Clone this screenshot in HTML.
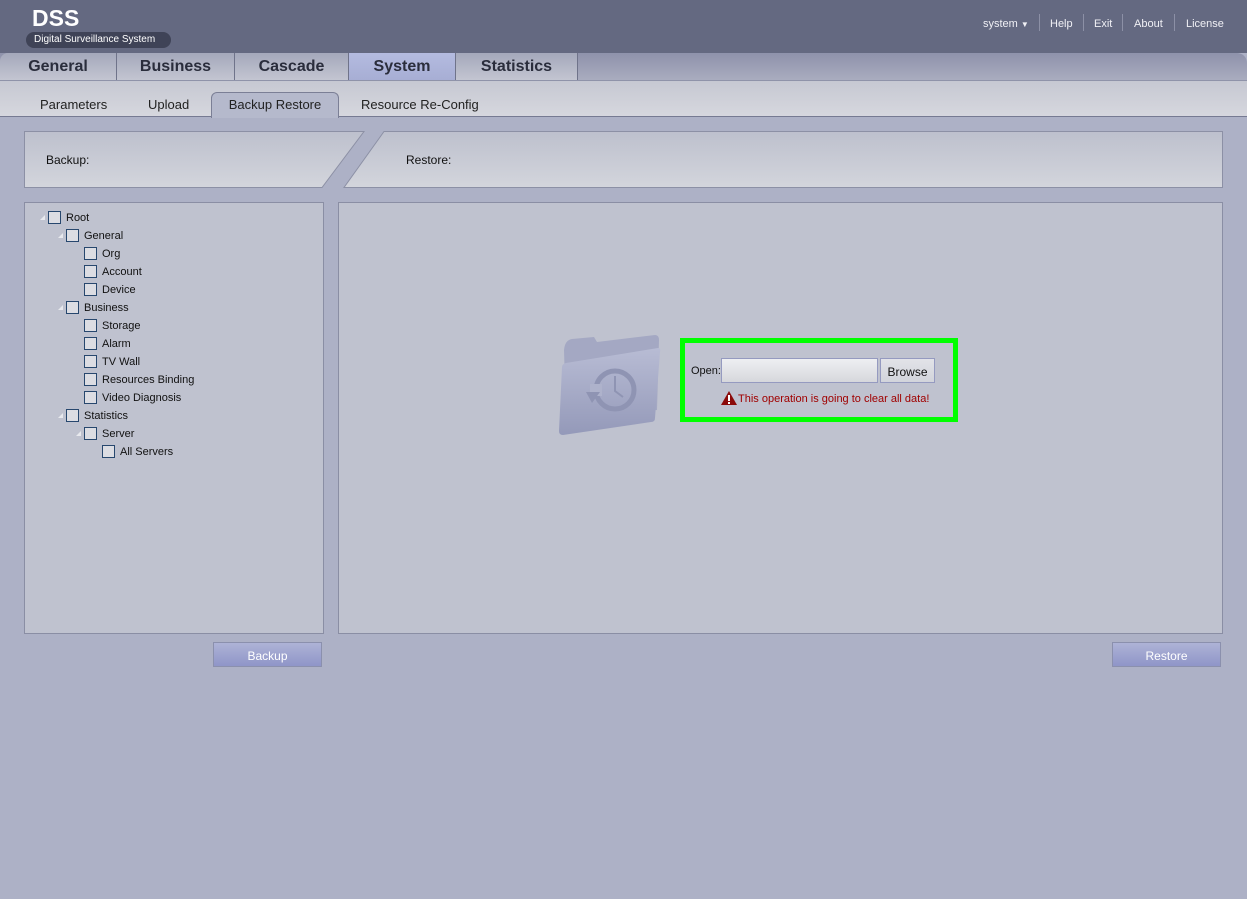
<!DOCTYPE html>
<html><head><meta charset="utf-8"><style>
*{margin:0;padding:0;box-sizing:border-box}
body{width:1247px;height:899px;background:#adb1c6;font-family:"Liberation Sans","DejaVu Sans",sans-serif;position:relative;overflow:hidden;font-size:11px;color:#111}
.abs{position:absolute}
#hdr{left:0;top:0;width:1247px;height:53px;background:#646981}
.logo{left:32px;top:5px;color:#fff;font-weight:bold;font-size:23px}
.pill{left:26px;top:32px;width:145px;height:16px;border-radius:8px;background:#3f4357;color:#fff;font-size:10px;line-height:16px;padding-left:8px}
.top{top:18px;color:#f0f0f5;font-size:11px}
.sep{top:14px;width:1px;height:17px;background:#8c90a6}
#tabs{left:0;top:53px;width:1247px;height:27px;background:linear-gradient(#8e92ab,#a9acbf);border-top-right-radius:10px}
.tab{top:53px;height:27px;background:linear-gradient(#a4a8bb,#c3c5d1);border-right:1px solid #6f738a;font-weight:bold;font-size:16px;color:#2a2d3c;text-align:center;line-height:27px}
#sub{left:0;top:80px;width:1247px;height:37px;background:linear-gradient(#c6c8d2,#d6d7de);border-top:1px solid #8f93a9;border-bottom:1px solid #767a92}
.st{top:97px;font-size:13px;color:#222}
.act{left:211px;top:92px;width:128px;height:26px;background:#b5b9cc;border:1px solid #7b7f96;border-bottom:none;border-radius:6px 6px 0 0;text-align:center;line-height:24px;font-size:13px;color:#222}
.panel{background:#bfc2cf;border:1px solid #8a8ea4}
.row{position:absolute;height:14px;font-size:11px;line-height:13px;color:#111}
.cb{display:inline-block;width:13px;height:13px;border:1px solid #27476e;background:#dcdde3;vertical-align:top;margin-right:5px;margin-top:-1px}
.tri{position:absolute;width:0;height:0;border-left:5px solid transparent;border-bottom:5px solid #e8e9ee}
.btn{height:25px;background:linear-gradient(#aeb3d6,#8f95c8);border:1px solid #8b90ad;color:#fff;font-size:12px;text-align:center;line-height:27px}
</style></head><body>
<div id="hdr" class="abs"></div>
<div class="abs logo">DSS</div>
<div class="abs pill">Digital Surveillance System</div>
<div class="abs top" style="left:983px">system <span style="font-size:8px">&#9660;</span></div>
<div class="abs sep" style="left:1039px"></div>
<div class="abs top" style="left:1050px">Help</div>
<div class="abs sep" style="left:1083px"></div>
<div class="abs top" style="left:1094px">Exit</div>
<div class="abs sep" style="left:1122px"></div>
<div class="abs top" style="left:1134px">About</div>
<div class="abs sep" style="left:1174px"></div>
<div class="abs top" style="left:1186px">License</div>

<div id="tabs" class="abs"></div>
<div class="abs tab" style="left:0;width:117px;border-top-left-radius:8px">General</div>
<div class="abs tab" style="left:117px;width:118px">Business</div>
<div class="abs tab" style="left:235px;width:114px">Cascade</div>
<div class="abs tab" style="left:349px;width:107px;background:linear-gradient(#b4bbe0,#a7aed4)">System</div>
<div class="abs tab" style="left:456px;width:122px">Statistics</div>

<div id="sub" class="abs"></div>
<div class="abs st" style="left:40px">Parameters</div>
<div class="abs st" style="left:148px">Upload</div>
<div class="abs act">Backup Restore</div>
<div class="abs st" style="left:361px">Resource Re-Config</div>

<svg class="abs" style="left:0;top:125px" width="1247" height="70">
<defs><linearGradient id="g" x1="0" y1="0" x2="0" y2="1"><stop offset="0" stop-color="#bdc0cd"/><stop offset="1" stop-color="#d3d5dc"/></linearGradient></defs>
<polygon points="24.5,6.5 364,6.5 322,62.5 24.5,62.5" fill="url(#g)" stroke="#8c90a5"/>
<polygon points="384,6.5 1222.5,6.5 1222.5,62.5 344,62.5" fill="url(#g)" stroke="#8c90a5"/>
<text x="46" y="39" font-size="12" font-family="Liberation Sans,sans-serif" fill="#111">Backup:</text>
<text x="406" y="39" font-size="12" font-family="Liberation Sans,sans-serif" fill="#111">Restore:</text>
</svg>

<div class="abs panel" style="left:24px;top:202px;width:300px;height:432px"></div>
<div class="abs panel" style="left:338px;top:202px;width:885px;height:432px"></div>

<div class="tri" style="left:40px;top:215px"></div><div class="row" style="left:48px;top:212px"><span class="cb"></span>Root</div>
<div class="tri" style="left:58px;top:233px"></div><div class="row" style="left:66px;top:230px"><span class="cb"></span>General</div>
<div class="row" style="left:84px;top:248px"><span class="cb"></span>Org</div>
<div class="row" style="left:84px;top:266px"><span class="cb"></span>Account</div>
<div class="row" style="left:84px;top:284px"><span class="cb"></span>Device</div>
<div class="tri" style="left:58px;top:305px"></div><div class="row" style="left:66px;top:302px"><span class="cb"></span>Business</div>
<div class="row" style="left:84px;top:320px"><span class="cb"></span>Storage</div>
<div class="row" style="left:84px;top:338px"><span class="cb"></span>Alarm</div>
<div class="row" style="left:84px;top:356px"><span class="cb"></span>TV Wall</div>
<div class="row" style="left:84px;top:374px"><span class="cb"></span>Resources Binding</div>
<div class="row" style="left:84px;top:392px"><span class="cb"></span>Video Diagnosis</div>
<div class="tri" style="left:58px;top:413px"></div><div class="row" style="left:66px;top:410px"><span class="cb"></span>Statistics</div>
<div class="tri" style="left:76px;top:431px"></div><div class="row" style="left:84px;top:428px"><span class="cb"></span>Server</div>
<div class="row" style="left:102px;top:446px"><span class="cb"></span>All Servers</div>

<svg class="abs" style="left:552px;top:330px" width="115" height="110">
<defs><linearGradient id="f" x1="0" y1="0" x2="0" y2="1"><stop offset="0" stop-color="#b8bcd4"/><stop offset="1" stop-color="#9499b9"/></linearGradient></defs>
<path d="M12,20 Q13,10 20,9 L42,7 L45,12 L103,5 Q107,5 107,10 L105,80 L14,88 Z" fill="#a4a8c3"/>
<path d="M14,33 L106,18 Q109,18 108,22 L103,88 Q103,92 99,92 L11,105 Q7,105 7,101 L10,37 Q10,34 14,33 Z" fill="url(#f)"/>
<circle cx="63" cy="60" r="19" fill="none" stroke="#8f94b3" stroke-width="5"/>
<rect x="38" y="54" width="12" height="12" fill="#aeb2cb"/>
<path d="M34,62 L48,62 L40,73 Z" fill="#8f94b3"/>
<path d="M63,46 L63,61 L71,67" stroke="#8f94b3" stroke-width="2" fill="none"/>
</svg>

<div class="abs" style="left:680px;top:338px;width:278px;height:84px;border:5px solid #00ff00"></div>
<div class="abs" style="left:691px;top:365px;font-size:11px">Open:</div>
<div class="abs" style="left:721px;top:358px;width:157px;height:25px;border:1px solid #959ac0;background:linear-gradient(#eeeff2,#d6d7dc)"></div>
<div class="abs" style="left:880px;top:358px;width:55px;height:25px;border:1px solid #959ac0;background:linear-gradient(#e2e3e8,#d2d4db);font-size:12px;line-height:27px;text-align:center">Browse</div>
<svg class="abs" style="left:721px;top:391px" width="16" height="14"><path d="M8,0 L16,14 L0,14 Z" fill="#8b0a0a"/><rect x="7" y="4" width="2" height="6" fill="#fff"/><rect x="7" y="11" width="2" height="2" fill="#fff"/></svg>
<div class="abs" style="left:738px;top:393px;font-size:11px;color:#a00000">This operation is going to clear all data!</div>

<div class="abs btn" style="left:213px;top:642px;width:109px">Backup</div>
<div class="abs btn" style="left:1112px;top:642px;width:109px">Restore</div>
</body></html>
